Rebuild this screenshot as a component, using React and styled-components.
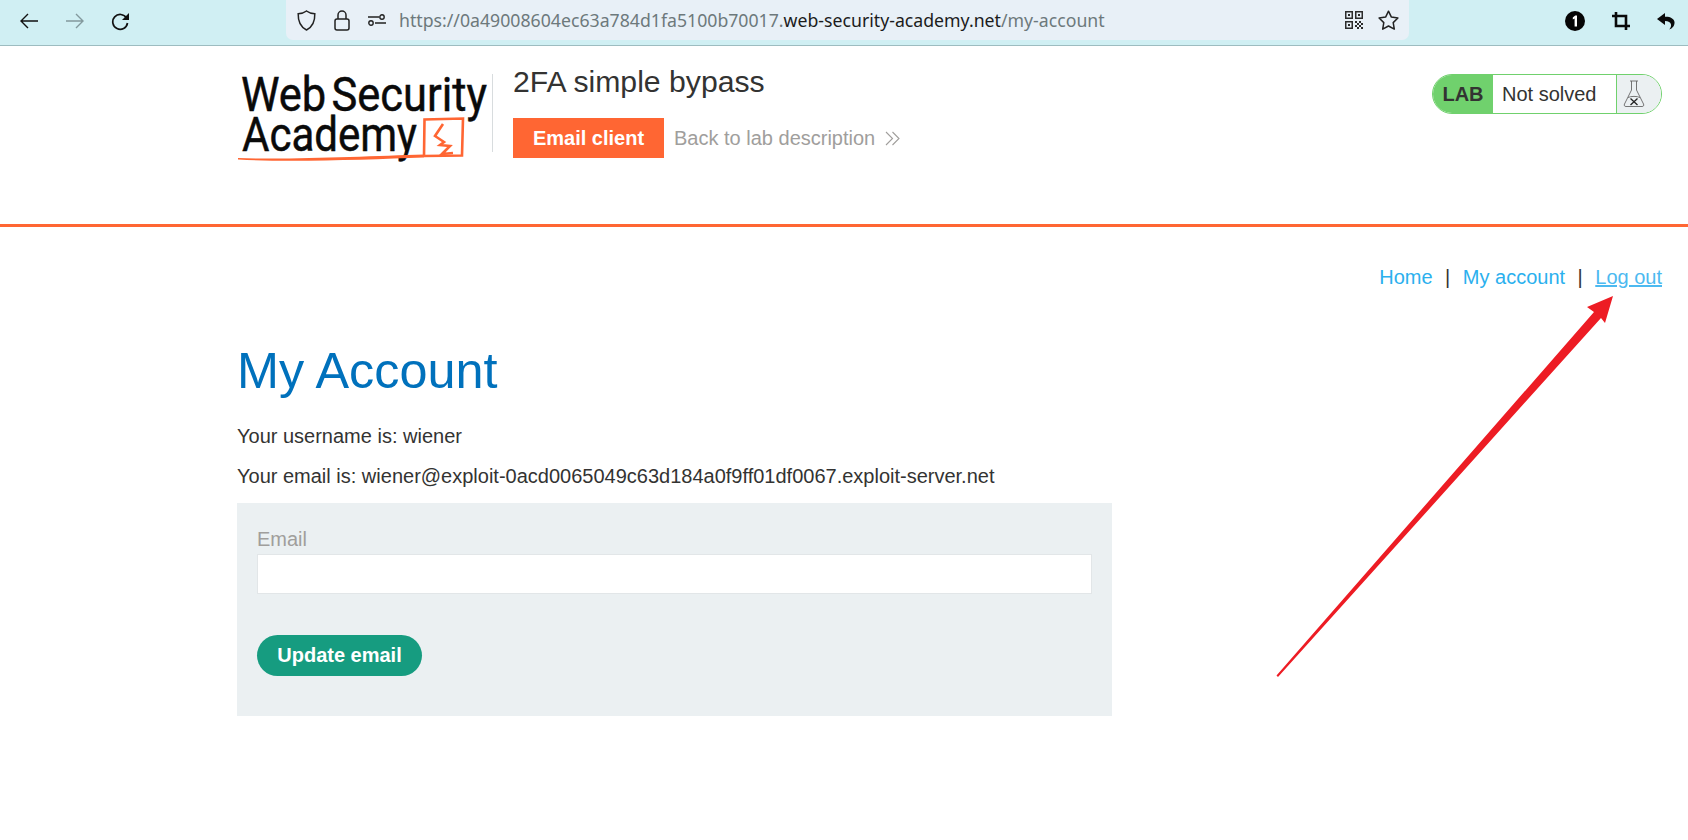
import styled, { createGlobalStyle } from "styled-components";

const GlobalStyle = createGlobalStyle`
  html, body {
    margin: 0;
    padding: 0;
    background: #fff;
    font-family: "Liberation Sans", Arial, sans-serif;
    color: #333332;
  }
  * {
    box-sizing: border-box;
  }
`;

const Page = styled.div`
  position: relative;
  width: 1688px;
  height: 840px;
  overflow: hidden;
`;

const Toolbar = styled.div`
  display: flex;
  align-items: flex-start;
  height: 46px;
  background: #d0eff3;
  border-bottom: 1px solid #9dbcc0;
`;

const NavIcons = styled.div`
  display: flex;
  align-items: center;
  gap: 27.5px;
  width: 286px;
  height: 40px;
  padding: 2px 0 0 20px;
`;

const UrlBar = styled.div`
  display: flex;
  align-items: center;
  width: 1123px;
  height: 40px;
  padding: 0 10px 0 11px;
  background: #e8f0f7;
  border-radius: 0 0 7px 7px;
`;

const UrlIcons = styled.div`
  display: flex;
  align-items: center;
  gap: 18px;
  margin-right: 13px;
`;

const UrlText = styled.div`
  flex: 1;
  font-family: "Noto Sans", "Open Sans", sans-serif;
  font-size: 17.7px;
  color: #6d797c;
  white-space: nowrap;
`;

const Domain = styled.span`
  color: #1c1c1c;
`;

const UrlActions = styled.div`
  display: flex;
  align-items: center;
  gap: 15px;
`;

const ExtIcons = styled.div`
  display: flex;
  align-items: center;
  gap: 27px;
  height: 40px;
  margin-left: auto;
  padding: 2px 13px 0 0;
`;

const LabHeader = styled.header`
  display: flex;
  justify-content: space-between;
  align-items: flex-start;
  height: 181px;
  padding: 19px 26px 0 237px;
  border-bottom: 3px solid #ff6633;
`;

const Brand = styled.div`
  display: flex;
  align-items: flex-start;
`;

const LogoWrap = styled.div`
  width: 255px;
  height: 90px;
  margin-top: 9px;
`;

const Divider = styled.div`
  width: 1px;
  height: 78px;
  margin-top: 9px;
  background: #d8dcde;
`;

const TitleBlock = styled.div`
  display: flex;
  flex-direction: column;
  margin-left: 20px;
`;

const LabTitle = styled.h2`
  margin: 0;
  font-size: 30.2px;
  font-weight: 400;
  line-height: 34px;
  color: #333332;
`;

const LabLinks = styled.div`
  display: flex;
  align-items: center;
  margin-top: 19px;
`;

const EmailClient = styled.a`
  display: flex;
  align-items: center;
  justify-content: center;
  width: 151px;
  height: 40px;
  background: #ff6633;
  color: #fff;
  font-size: 20px;
  font-weight: 700;
`;

const BackLink = styled.a`
  display: flex;
  align-items: center;
  gap: 10px;
  margin-left: 10px;
  color: #a09e9c;
  font-size: 20px;
`;

const LabStatus = styled.div`
  display: flex;
  width: 230px;
  height: 40px;
  margin-top: 9px;
  border: 1.5px solid #70d16d;
  border-radius: 20px;
  overflow: hidden;
`;

const LabTag = styled.div`
  display: flex;
  align-items: center;
  justify-content: center;
  width: 60px;
  background: #70d16d;
  font-size: 20px;
  font-weight: 700;
  color: #333332;
`;

const LabState = styled.div`
  flex: 1;
  display: flex;
  align-items: center;
  padding-left: 9px;
  font-size: 20px;
  border-right: 1.5px solid #70d16d;
`;

const LabFlask = styled.div`
  display: flex;
  align-items: center;
  justify-content: flex-start;
  width: 44px;
  padding-left: 6px;
  background: #ebf0f2;
`;

const Content = styled.main`
  padding: 0 26px 0 237px;
`;

const TopLinks = styled.nav`
  display: flex;
  justify-content: flex-end;
  align-items: center;
  gap: 12.5px;
  margin-top: 38px;
  font-size: 20px;
  line-height: 24px;
`;

const TopLink = styled.a`
  color: ${(props) => (props.$active ? "#4cb9f0" : "#2bb0ee")};
  text-decoration: ${(props) => (props.$active ? "underline" : "none")};
`;

const Sep = styled.span`
  color: #333332;
`;

const Heading = styled.h1`
  margin: 52px 0 0;
  font-size: 50.4px;
  font-weight: 400;
  line-height: 60px;
  color: #0071bc;
`;

const Info = styled.p`
  margin: ${(props) => (props.$first ? "24px" : "17px")} 0 0;
  font-size: 20px;
  line-height: 23px;
  color: #333332;
`;

const FormPanel = styled.form`
  width: 875px;
  height: 213px;
  margin-top: 15px;
  padding: 22px 20px 0;
  background: #ebf0f2;
`;

const FieldLabel = styled.label`
  display: block;
  font-size: 20px;
  line-height: 29px;
  color: #a09e9c;
`;

const FieldInput = styled.input`
  display: block;
  width: 100%;
  height: 40px;
  background: #fff;
  border: 1px solid #e2e6e8;
  outline: none;
`;

const SubmitButton = styled.button`
  display: block;
  width: 165px;
  height: 41px;
  margin-top: 41px;
  padding: 0;
  border: 0;
  border-radius: 21px;
  background: #169c80;
  color: #fff;
  font-family: inherit;
  font-size: 20px;
  font-weight: 700;
`;

const ArrowOverlay = styled.svg`
  position: absolute;
  left: 0;
  top: 0;
  pointer-events: none;
`;

const Logo = () => (
  <svg width="255" height="90" viewBox="237 73 255 90" overflow="visible">
    <g
      fontFamily="Roboto, sans-serif"
      fontSize="48"
      fill="#0a0a0a"
      stroke="#0a0a0a"
      strokeWidth="0.5"
    >
      <text x="241" y="110" wordSpacing="-6" textLength="246" lengthAdjust="spacingAndGlyphs">
        Web Security
      </text>
      <text x="242" y="150" textLength="175" lengthAdjust="spacingAndGlyphs">
        Academy
      </text>
    </g>
    <path
      d="M238 157 C 290 159 370 155 424 153.500 L424 156.500 C 370 158.500 290 161.500 238 158.500Z"
      fill="#ff6633"
    />
    <path
      d="M424 155 L424.500 118.500 L463 117.500 L462 154.500 L424 155"
      fill="none"
      stroke="#ff6633"
      strokeWidth="2.6"
    />
    <path
      d="M443 123 L435 135 L444 141 L440 144 L450 145 L442 153 L453 152"
      fill="none"
      stroke="#ff6633"
      strokeWidth="2.6"
    />
  </svg>
);

const Back = ({ color = "#111" }) => (
  <svg width="18" height="16" viewBox="0 0 18 16" fill="none" stroke={color} strokeWidth="1.4">
    <path d="M18 8H1M8 1 1 8l7 7" />
  </svg>
);

const Forward = () => (
  <svg width="18" height="16" viewBox="0 0 18 16" fill="none" stroke="#83999d" strokeWidth="1.4">
    <path d="M0 8h17M10 1l7 7-7 7" />
  </svg>
);

const Reload = () => (
  <svg width="19" height="19" viewBox="0 0 19 19" fill="none">
    <path d="M15.5 6A7.4 7.4 0 1 0 16.5 11" stroke="#111" strokeWidth="1.7" />
    <path d="M18 1v7h-7z" fill="#111" />
  </svg>
);

const Shield = () => (
  <svg width="19" height="21" viewBox="0 0 19 21" fill="none" stroke="#222" strokeWidth="1.5">
    <path d="M9.5 1 C7 3 4 3.6 1.2 3.8 C1 10 2.5 16.5 9.5 20 C16.5 16.5 18 10 17.8 3.8 C15 3.6 12 3 9.5 1Z" />
  </svg>
);

const Lock = () => (
  <svg width="16" height="21" viewBox="0 0 16 21" fill="none" stroke="#222" strokeWidth="1.5">
    <rect x="1" y="9" width="14" height="11" rx="2" />
    <path d="M4 9V5a4 4 0 0 1 8 0v4" />
  </svg>
);

const Tune = () => (
  <svg width="18" height="12" viewBox="0 0 18 12" fill="none" stroke="#222" strokeWidth="1.4">
    <path d="M0 3h11M7 9h11" />
    <circle cx="14" cy="3" r="2.2" />
    <circle cx="3" cy="9" r="2.2" />
  </svg>
);

const Qr = () => (
  <svg width="18" height="18" viewBox="0 0 18 18" fill="#2c2c2c">
    <path d="M0 0h8v8H0zM1.500 1.500v5h5v-5zM10 0h8v8h-8zM11.500 1.500v5h5v-5zM0 10h8v8H0zM1.500 11.500v5h5v-5z" fillRule="evenodd" />
    <path d="M3 3h2v2H3zM13 3h2v2h-2zM3 13h2v2H3zM10 10h2v2h-2zM14 10h2v2h-2zM12 12h2v2h-2zM16 12h2v2h-2zM10 14h2v2h-2zM14 14h2v2h-2zM12 16h2v2h-2zM16 16h2v2h-2z" />
  </svg>
);

const Star = () => (
  <svg width="21" height="20" viewBox="0 0 21 20" fill="none" stroke="#222" strokeWidth="1.5" strokeLinejoin="round">
    <path d="M10.5 1.2l2.9 5.9 6.5.9-4.7 4.6 1.1 6.5-5.8-3.1-5.8 3.1 1.1-6.5L1.1 8l6.5-.9z" />
  </svg>
);

const Badge = () => (
  <svg width="20" height="20" viewBox="0 0 20 20">
    <circle cx="10" cy="10" r="10" fill="#050505" />
    <path d="M10.2 4.5h1.8v11H9.6V7.6L7.8 8.6V6.5z" fill="#fff" />
  </svg>
);

const Crop = () => (
  <svg width="18" height="18" viewBox="0 0 18 18" fill="none" stroke="#0a0a0a" strokeWidth="2.6">
    <path d="M4 0v14h14M0 4h14v14" />
  </svg>
);

const Undo = () => (
  <svg width="18" height="18" viewBox="0 0 18 18" fill="#0a0a0a">
    <path d="M8 1 0 7l8 6V9c3.5 0 5.5 1.5 6 3.5.3 1.6-.3 3.4-1.8 5 3.4-1 5.6-4 5.3-7.5C17 6.500 13 4.500 8 4.800z" />
  </svg>
);

const Chevrons = () => (
  <svg width="16" height="15" viewBox="0 0 16 15" fill="none" stroke="#a09e9c" strokeWidth="1.1">
    <path d="M1 1l6.500 6.500L1 14M7.500 1l6.500 6.500L7.500 14" />
  </svg>
);

const Flask = () => (
  <svg width="22" height="30" viewBox="0 0 22 30" fill="none" stroke="#666" strokeWidth="0.9">
    <path d="M7 2h8M8.500 2v9L1.500 25c-.7 1.500 0 2.500 1.500 2.500h16c1.500 0 2.200-1 1.500-2.500L13.500 11V2" />
    <path d="M5 18.500c3-1.500 9-1.500 12 0" />
    <path d="M7.500 19.500l7 6.500M14.500 19.500l-7 6.500" stroke="#222" strokeWidth="1.3" />
  </svg>
);

const App = () => {
  return (
    <Page>
      <GlobalStyle />
      <Toolbar>
        <NavIcons>
          <Back />
          <Forward />
          <Reload />
        </NavIcons>
        <UrlBar>
          <UrlIcons>
            <Shield />
            <Lock />
            <Tune />
          </UrlIcons>
          <UrlText>
            https://0a49008604ec63a784d1fa5100b70017.
            <Domain>web-security-academy.net</Domain>/my-account
          </UrlText>
          <UrlActions>
            <Qr />
            <Star />
          </UrlActions>
        </UrlBar>
        <ExtIcons>
          <Badge />
          <Crop />
          <Undo />
        </ExtIcons>
      </Toolbar>

      <LabHeader>
        <Brand>
          <LogoWrap>
            <Logo />
          </LogoWrap>
          <Divider />
          <TitleBlock>
            <LabTitle>2FA simple bypass</LabTitle>
            <LabLinks>
              <EmailClient>Email client</EmailClient>
              <BackLink>
                Back to lab description
                <Chevrons />
              </BackLink>
            </LabLinks>
          </TitleBlock>
        </Brand>
        <LabStatus>
          <LabTag>LAB</LabTag>
          <LabState>Not solved</LabState>
          <LabFlask>
            <Flask />
          </LabFlask>
        </LabStatus>
      </LabHeader>

      <Content>
        <TopLinks>
          <TopLink>Home</TopLink>
          <Sep>|</Sep>
          <TopLink>My account</TopLink>
          <Sep>|</Sep>
          <TopLink $active>Log out</TopLink>
        </TopLinks>
        <Heading>My Account</Heading>
        <Info $first>Your username is: wiener</Info>
        <Info>Your email is: wiener@exploit-0acd0065049c63d184a0f9ff01df0067.exploit-server.net</Info>
        <FormPanel>
          <FieldLabel>Email</FieldLabel>
          <FieldInput />
          <SubmitButton type="button">Update email</SubmitButton>
        </FormPanel>
      </Content>

      <ArrowOverlay width="1688" height="840" viewBox="0 0 1688 840">
        <path
          d="M1276.500 675.500 L1594 312 L1587 307 L1613 296 L1605 323 L1601 318 L1278 677 Z"
          fill="#ed1c24"
        />
      </ArrowOverlay>
    </Page>
  );
};

export default App;
